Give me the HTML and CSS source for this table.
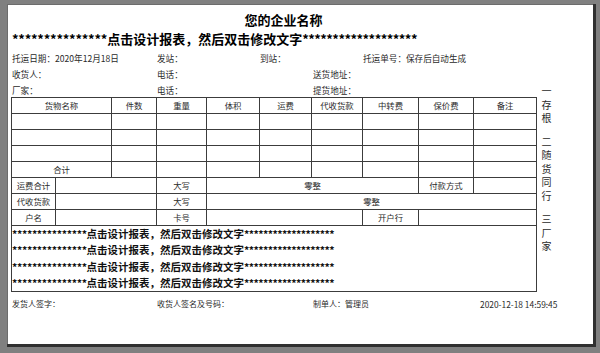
FILE: index.html
```html
<!DOCTYPE html>
<html lang="zh-CN">
<head>
<meta charset="utf-8">
<title>托运单</title>
<link rel="stylesheet" href="styles.css">
</head>
<body>
<div class="paper">
  <div class="title">您的企业名称</div>
  <div class="subtitle"><span class="stars">***************</span>点击设计报表，然后双击修改文字<span class="stars after">*******************</span></div>
  <div class="info">
    <span class="c1">托运日期：2020年12月18日</span>
    <span class="c2">发站：</span>
    <span class="c3">到站：</span>
    <span class="c5">托运单号：保存后自动生成</span>
    <span class="c1">收货人：</span>
    <span class="c2">电话：</span>
    <span class="c4">送货地址：</span>
    <span class="c1">厂家：</span>
    <span class="c2">电话：</span>
    <span class="c4">提货地址：</span>
  </div>
  <div class="main">
    <table class="sheet">
      <colgroup>
        <col class="w44"><col class="w56"><col class="w45"><col class="w50"><col class="w53">
        <col class="w52"><col class="w51"><col class="w56"><col class="w55"><col class="w63">
      </colgroup>
      <tr>
        <td colspan="2">货物名称</td><td>件数</td><td>重量</td><td>体积</td><td>运费</td>
        <td>代收货款</td><td>中转费</td><td>保价费</td><td>备注</td>
      </tr>
      <tr><td colspan="2"></td><td></td><td></td><td></td><td></td><td></td><td></td><td></td><td></td></tr>
      <tr><td colspan="2"></td><td></td><td></td><td></td><td></td><td></td><td></td><td></td><td></td></tr>
      <tr><td colspan="2"></td><td></td><td></td><td></td><td></td><td></td><td></td><td></td><td></td></tr>
      <tr><td colspan="2">合计</td><td></td><td></td><td></td><td></td><td></td><td></td><td></td><td></td></tr>
      <tr>
        <td>运费合计</td><td colspan="2"></td><td>大写</td><td colspan="4">零整</td><td>付款方式</td><td></td>
      </tr>
      <tr>
        <td>代收货款</td><td colspan="2"></td><td>大写</td><td colspan="6">零整</td>
      </tr>
      <tr>
        <td>户名</td><td colspan="2"></td><td>卡号</td><td colspan="3"></td><td>开户行</td><td colspan="2"></td>
      </tr>
      <tr class="boxrow">
        <td colspan="10" class="box">
          <div class="line"><span class="stars">***************</span>点击设计报表，然后双击修改文字<span class="stars after">*******************</span></div>
          <div class="line"><span class="stars">***************</span>点击设计报表，然后双击修改文字<span class="stars after">*******************</span></div>
          <div class="line"><span class="stars">***************</span>点击设计报表，然后双击修改文字<span class="stars after">*******************</span></div>
          <div class="line"><span class="stars">***************</span>点击设计报表，然后双击修改文字<span class="stars after">*******************</span></div>
        </td>
      </tr>
    </table>
    <div class="side">
      <div class="grp"><span>一</span><span>存</span><span>根</span></div>
      <div class="grp"><span>二</span><span>随</span><span>货</span><span>同</span><span>行</span></div>
      <div class="grp"><span>三</span><span>厂</span><span>家</span></div>
    </div>
  </div>
  <div class="footer">
    <span>发货人签字：</span>
    <span>收货人签名及号码：</span>
    <span>制单人：管理员</span>
    <span class="time">2020-12-18 14:59:45</span>
  </div>
</div>
</body>
</html>
```
FILE: styles.css
```css
html, body {
  margin: 0;
  padding: 0;
}
body {
  background: #808080;
  height: 353px;
  overflow: hidden;
  font-family: "Noto Sans CJK SC", "Noto Sans", sans-serif;
  color: #2a2a2a;
}
.paper {
  box-sizing: border-box;
  margin: 4px 0 0 7px;
  width: 586px;
  height: 340px;
  background: #fff;
  border-top: 1px solid #6c6c6c;
  border-left: 1px solid #6c6c6c;
  box-shadow: 3px 0 0 #303030, 0 3px 0 #303030, 3px 3px 0 #303030;
  padding: 7px 37px 0 3px;
}
.title {
  text-align: center;
  font-size: 13px;
  font-weight: bold;
  line-height: 16px;
  height: 16px;
  color: #000;
}
.subtitle {
  font-size: 13px;
  font-weight: bold;
  line-height: 22px;
  height: 22px;
  padding-left: 1px;
  color: #000;
  white-space: nowrap;
}
.subtitle .stars {
  letter-spacing: -0.25px;
}
.subtitle .stars.after {
  letter-spacing: -0.55px;
}
.info {
  display: grid;
  grid-template-columns: 145px 103px 53px 50px 1fr;
  grid-template-rows: 16px 16px 15px;
  font-size: 8.6px;
  line-height: 16px;
  padding-left: 1px;
  white-space: nowrap;
}
.c1 { grid-column: 1; }
.c2 { grid-column: 2; }
.c3 { grid-column: 3; }
.c4 { grid-column: 4 / 6; }
.c5 { grid-column: 5; }
.main {
  display: flex;
  align-items: flex-start;
}
.sheet {
  border-collapse: collapse;
  table-layout: fixed;
  width: 526px;
  font-size: 8.4px;
}
.w44 { width: 44px; }
.w45 { width: 45px; }
.w50 { width: 50px; }
.w51 { width: 51px; }
.w52 { width: 52px; }
.w53 { width: 53px; }
.w55 { width: 55px; }
.w56 { width: 56px; }
.w63 { width: 63px; }
.sheet td {
  border: 1px solid #3c3c3c;
  height: 15px;
  padding: 0;
  line-height: 15px;
  text-align: center;
  vertical-align: middle;
  white-space: nowrap;
}
.sheet .box {
  height: 64px;
  text-align: left;
  vertical-align: top;
  padding: 0;
}
.line {
  font-size: 10.5px;
  font-weight: bold;
  line-height: 16.25px;
  height: 16.25px;
  color: #111;
  white-space: nowrap;
}
.line .stars {
  letter-spacing: -0.35px;
}
.line .stars.after {
  letter-spacing: -0.6px;
}
.side {
  width: 20px;
  margin-top: -13px;
  display: flex;
  flex-direction: column;
  gap: 10px;
  font-size: 10px;
  line-height: 13.5px;
  text-align: center;
}
.grp {
  display: flex;
  flex-direction: column;
}
.footer {
  display: grid;
  grid-template-columns: 145px 156px 167px 1fr;
  margin-top: 4px;
  padding-left: 1px;
  font-size: 8px;
  line-height: 16px;
  white-space: nowrap;
}
.footer .time {
  font-size: 8.4px;
}
```
